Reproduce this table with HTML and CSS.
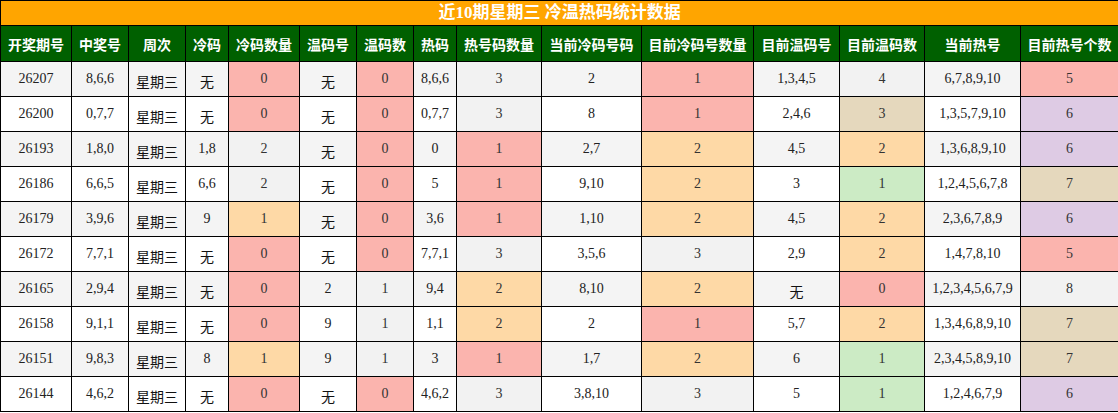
FILE: index.html
```html
<!DOCTYPE html>
<html lang="zh">
<head>
<meta charset="utf-8">
<title>近10期星期三 冷温热码统计数据</title>
<link rel="stylesheet" href="styles.css">
</head>
<body>
<table class="stats">
<colgroup>
<col class="w71"><col class="w57"><col class="w57"><col class="w43"><col class="w71"><col class="w57"><col class="w57"><col class="w43"><col class="w85"><col class="w100"><col class="w112"><col class="w86"><col class="w85"><col class="w96"><col class="w98">
</colgroup>
<thead>
<tr class="title-row"><th colspan="15">近10期星期三 冷温热码统计数据</th></tr>
<tr class="head-row">
<th>开奖期号</th><th>中奖号</th><th>周次</th><th>冷码</th><th>冷码数量</th><th>温码号</th><th>温码数</th><th>热码</th><th>热号码数量</th><th>当前冷码号码</th><th>目前冷码号数量</th><th>目前温码号</th><th>目前温码数</th><th>当前热号</th><th>目前热号个数</th>
</tr>
</thead>
<tbody>
<tr class="odd"><td>26207</td><td>8,6,6</td><td class="cjk">星期三</td><td class="cjk">无</td><td class="c-pink">0</td><td class="cjk">无</td><td class="c-pink">0</td><td>8,6,6</td><td class="c-gray">3</td><td>2</td><td class="c-pink">1</td><td>1,3,4,5</td><td class="c-gray">4</td><td>6,7,8,9,10</td><td class="c-pink">5</td></tr>
<tr><td>26200</td><td>0,7,7</td><td class="cjk">星期三</td><td class="cjk">无</td><td class="c-pink">0</td><td class="cjk">无</td><td class="c-pink">0</td><td>0,7,7</td><td class="c-gray">3</td><td>8</td><td class="c-pink">1</td><td>2,4,6</td><td class="c-beige">3</td><td>1,3,5,7,9,10</td><td class="c-purple">6</td></tr>
<tr class="odd"><td>26193</td><td>1,8,0</td><td class="cjk">星期三</td><td>1,8</td><td class="c-gray">2</td><td class="cjk">无</td><td class="c-pink">0</td><td>0</td><td class="c-pink">1</td><td>2,7</td><td class="c-orange">2</td><td>4,5</td><td class="c-orange">2</td><td>1,3,6,8,9,10</td><td class="c-purple">6</td></tr>
<tr><td>26186</td><td>6,6,5</td><td class="cjk">星期三</td><td>6,6</td><td class="c-gray">2</td><td class="cjk">无</td><td class="c-pink">0</td><td>5</td><td class="c-pink">1</td><td>9,10</td><td class="c-orange">2</td><td>3</td><td class="c-green">1</td><td>1,2,4,5,6,7,8</td><td class="c-beige">7</td></tr>
<tr class="odd"><td>26179</td><td>3,9,6</td><td class="cjk">星期三</td><td>9</td><td class="c-orange">1</td><td class="cjk">无</td><td class="c-pink">0</td><td>3,6</td><td class="c-pink">1</td><td>1,10</td><td class="c-orange">2</td><td>4,5</td><td class="c-orange">2</td><td>2,3,6,7,8,9</td><td class="c-purple">6</td></tr>
<tr><td>26172</td><td>7,7,1</td><td class="cjk">星期三</td><td class="cjk">无</td><td class="c-pink">0</td><td class="cjk">无</td><td class="c-pink">0</td><td>7,7,1</td><td class="c-gray">3</td><td>3,5,6</td><td class="c-gray">3</td><td>2,9</td><td class="c-orange">2</td><td>1,4,7,8,10</td><td class="c-pink">5</td></tr>
<tr class="odd"><td>26165</td><td>2,9,4</td><td class="cjk">星期三</td><td class="cjk">无</td><td class="c-pink">0</td><td>2</td><td class="c-gray">1</td><td>9,4</td><td class="c-orange">2</td><td>8,10</td><td class="c-orange">2</td><td class="cjk">无</td><td class="c-pink">0</td><td>1,2,3,4,5,6,7,9</td><td class="c-gray">8</td></tr>
<tr><td>26158</td><td>9,1,1</td><td class="cjk">星期三</td><td class="cjk">无</td><td class="c-pink">0</td><td>9</td><td class="c-gray">1</td><td>1,1</td><td class="c-orange">2</td><td>2</td><td class="c-pink">1</td><td>5,7</td><td class="c-orange">2</td><td>1,3,4,6,8,9,10</td><td class="c-beige">7</td></tr>
<tr class="odd"><td>26151</td><td>9,8,3</td><td class="cjk">星期三</td><td>8</td><td class="c-orange">1</td><td>9</td><td class="c-gray">1</td><td>3</td><td class="c-pink">1</td><td>1,7</td><td class="c-orange">2</td><td>6</td><td class="c-green">1</td><td>2,3,4,5,8,9,10</td><td class="c-beige">7</td></tr>
<tr><td>26144</td><td>4,6,2</td><td class="cjk">星期三</td><td class="cjk">无</td><td class="c-pink">0</td><td class="cjk">无</td><td class="c-pink">0</td><td>4,6,2</td><td class="c-gray">3</td><td>3,8,10</td><td class="c-gray">3</td><td>5</td><td class="c-green">1</td><td>1,2,4,6,7,9</td><td class="c-purple">6</td></tr>
</tbody>
</table>
</body>
</html>
```
FILE: styles.css
```css
html, body {
  margin: 0;
  padding: 0;
  background: #ffffff;
}

.stats {
  width: 1118px;
  table-layout: fixed;
  border-collapse: collapse;
  font-family: "Liberation Serif", "Noto Sans CJK SC", serif;
  font-size: 14px;
  color: #222;
}

.w71 { width: 71px; }
.w57 { width: 57px; }
.w43 { width: 43px; }
.w85 { width: 85px; }
.w86 { width: 86px; }
.w96 { width: 96px; }
.w98 { width: 98px; }
.w100 { width: 100px; }
.w112 { width: 112px; }

.stats th,
.stats td {
  border: 1px solid #000;
  padding: 0;
  text-align: center;
  vertical-align: middle;
  white-space: nowrap;
  overflow: hidden;
}

.title-row th {
  height: 24px;
  background: #ffa500;
  color: #fff;
  font-size: 17px;
  font-weight: bold;
  line-height: 22px;
}

.head-row th {
  height: 35px;
  background: #006000;
  color: #fff;
  font-family: "Noto Sans CJK SC", "Liberation Sans", sans-serif;
  font-size: 14px;
  font-weight: bold;
  line-height: 18px;
}

.stats tbody td {
  height: 34px;
  line-height: 16px;
  background: #ffffff;
}

.stats tbody tr.odd td {
  background: #f4f4f4;
}

.stats tbody td.cjk {
  font-family: "Noto Sans CJK SC", sans-serif;
  font-size: 14px;
  color: #111;
  height: 30px;
  padding-top: 4px;
}

.stats tbody tr td.c-pink { background: #fbb4ae; color: #333; }
.stats tbody tr td.c-orange { background: #fed9a6; color: #333; }
.stats tbody tr td.c-green { background: #ccebc5; color: #333; }
.stats tbody tr td.c-purple { background: #decbe4; color: #333; }
.stats tbody tr td.c-beige { background: #e5d8bd; color: #333; }
.stats tbody tr td.c-gray { background: #f2f2f2; color: #333; }
```
